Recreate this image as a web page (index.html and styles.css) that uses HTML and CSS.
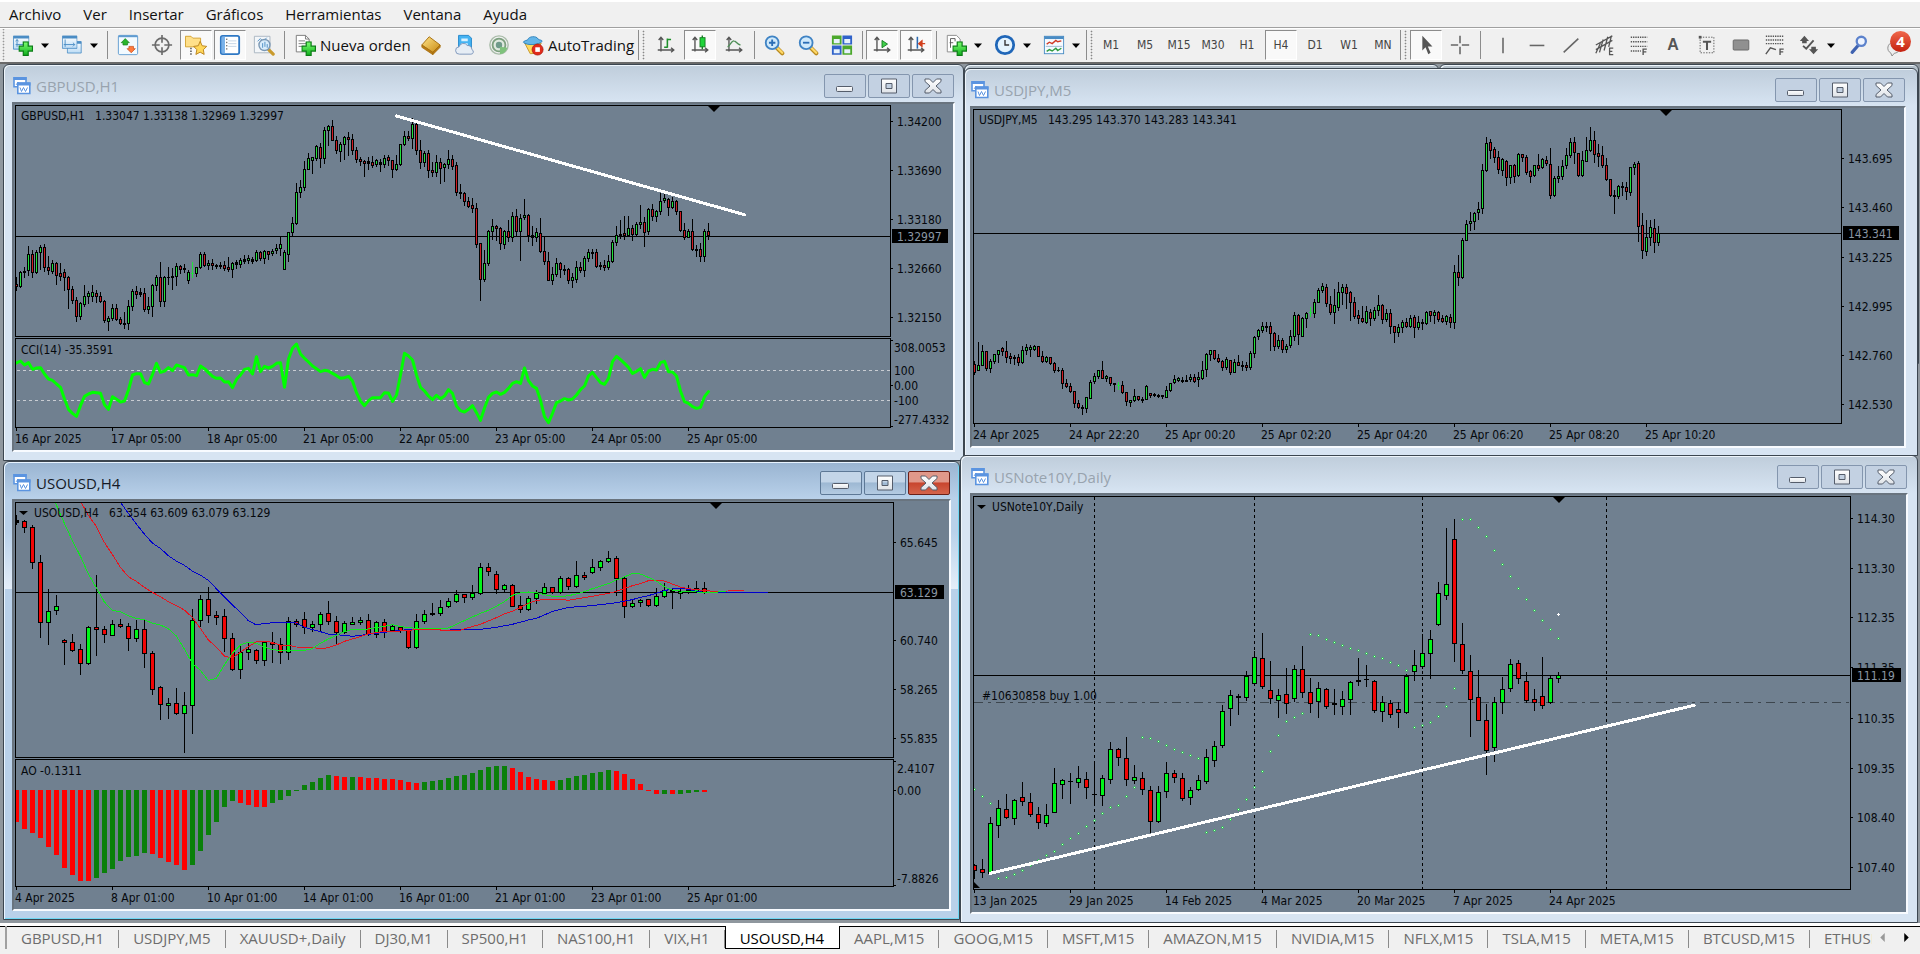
FILE: index.html
```html
<!DOCTYPE html>
<html lang="es">
<head>
<meta charset="utf-8">
<title>Terminal - USOUSD,H4</title>
<link rel="stylesheet" href="styles.css">
</head>
<body>
<svg class="defs" aria-hidden="true">
  <defs>
    <linearGradient id="plus" x2="0" y2="1"><stop stop-color="#7dff72"/><stop offset="1" stop-color="#0fae1c"/></linearGradient>
    <linearGradient id="sky" x2="0" y2="1"><stop stop-color="#fff"/><stop offset="1" stop-color="#bcdcf5"/></linearGradient>
    <linearGradient id="gold" x2="1" y2="1"><stop stop-color="#ffe58a"/><stop offset="1" stop-color="#c98a12"/></linearGradient>
    <linearGradient id="steel" x2="0" y2="1"><stop stop-color="#fff"/><stop offset="1" stop-color="#dfe3e8"/></linearGradient>
  </defs>
  <symbol id="i-plus" viewBox="0 0 12 12"><path d="M4 .5h4V4h3.500v4H8v3.500H4V8H.5V4H4z" fill="url(#plus)" stroke="#0b7d16"/></symbol>
  <symbol id="i-doc" viewBox="0 0 18 18"><path d="M.5 1.500h17v14H.5z" fill="url(#sky)" stroke="#4a8cc4"/><path d="M.5 1h17v3H.5z" fill="#4a8cc4"/></symbol>
  <symbol id="i-lens" viewBox="0 0 24 24"><path d="M15 15l6 6" stroke="#b98a1e" stroke-width="4.500" stroke-linecap="round"/><path d="M15.500 15l5.500 5.500" stroke="#ffd968" stroke-width="2.500" stroke-linecap="round"/><circle cx="10" cy="9.500" r="7" fill="#cfe9fb" stroke="#3f83c4" stroke-width="2"/></symbol>
  <symbol id="i-axes" viewBox="0 0 24 24"><path d="M6.500 4v15M3 17.500h17M4 6.500l2.500-3 2.500 3M17.500 15l3 2.500-3 2.500" fill="none" stroke="#555" stroke-width="1.500"/></symbol>
  <symbol id="i-win" viewBox="0 0 18 18"><path d="M1 .8h12v9H1z" fill="#fff" stroke="#5b94e0" stroke-width="1.600"/><path d="M.5 0h13v3H.5z" fill="#5b94e0"/><path d="M3 8l2-3 2 2" fill="none" stroke="#7aa7e4"/><path d="M4.800 6h12v10.500h-12z" fill="#fff" stroke="#5b94e0" stroke-width="1.600"/><path d="M4 5.500h13.500V8.500H4z" fill="#5b94e0"/><path d="M7 10.500l1.500 4 2-4 2 4 2-4" fill="none" stroke="#5b94e0"/></symbol>
  <symbol id="i-min" viewBox="0 0 20 18"><rect x="1.500" y="9.500" width="16" height="5" rx="1" fill="url(#steel)" stroke="#555d6b"/></symbol>
  <symbol id="i-max" viewBox="0 0 20 18"><path d="M2.500 2h15v14h-15zM7 6.500v5h6v-5z" fill="url(#steel)" fill-rule="evenodd" stroke="#555d6b"/></symbol>
  <symbol id="i-x" viewBox="0 0 20 18"><path d="M2 2h4.500L10 5.500 13.500 2H18v2.500L13 9l5 4.500V16h-4.500L10 12.500 6.500 16H2v-2.500L7 9 2 4.500z" fill="url(#steel)" stroke="#555d6b"/></symbol>
  <symbol id="i-caret" viewBox="0 0 8 5"><path d="M0 .5h8L4 5z"/></symbol>
</svg>

<nav class="menu" aria-label="Menú principal">
  <button>Archivo</button><button>Ver</button><button>Insertar</button><button>Gráficos</button><button>Herramientas</button><button>Ventana</button><button>Ayuda</button>
</nav>

<div class="toolbar" role="toolbar" aria-label="Herramientas">
  <div class="group group-standard">
    <button class="tool" aria-label="Nuevo gráfico"><svg viewBox="0 0 24 24"><use href="#i-doc" x="1" y="1" width="18" height="18"/><path d="M5.500 6v8M4 11.500h11M4 8l1.500-2 1.500 2" fill="none" stroke="#4a8cc4"/><use href="#i-plus" x="7" y="8" width="16" height="16"/></svg></button>
    <button class="drop" aria-label="Lista de gráficos"><svg><use href="#i-caret"/></svg></button>
    <button class="tool" aria-label="Perfiles"><svg viewBox="0 0 24 24"><use href="#i-doc" x="6" y="7" width="17" height="16"/><use href="#i-doc" x="1" y="1" width="17" height="17"/><path d="M4.500 6v8M3 11.500h12M13 9.500l2 2-2 2" fill="none" stroke="#4a8cc4"/></svg></button>
    <button class="drop" aria-label="Lista de perfiles"><svg><use href="#i-caret"/></svg></button>
    <i class="sep"></i>
    <button class="tool" aria-label="Observación del mercado"><svg viewBox="0 0 24 24"><rect x="1.500" y="1.500" width="21" height="21" rx="1.500" fill="#f2faff" stroke="#5f9bd0"/><path d="M1.500 2.500h21" stroke="#5f9bd0" stroke-width="2"/><path d="M9 5l4.500 4.500h-2V12h-5V9.500h-2z" fill="#28b52c" stroke="#157a1a" stroke-width=".7"/><path d="M15.500 20.500L11 16h2v-2.500h5V16h2z" fill="#ff7a3c" stroke="#c2410c" stroke-width=".7"/></svg></button>
    <button class="tool" aria-label="Ventana de datos"><svg viewBox="0 0 24 24" fill="none" stroke="#6b6b6b"><circle cx="12" cy="12" r="7.500" stroke-width="1.800"/><path d="M12 1v8.500M12 14.500V23M1 12h8.500M14.500 12H23" stroke-width="1.800"/></svg></button>
    <button class="tool is-on" aria-label="Navegador"><svg viewBox="0 0 24 24"><path d="M.5 14V2.500h6l2 2H17V14z" fill="#ffe08a" stroke="#d1a02c"/><path d="M6.500 15v8" stroke="#444" stroke-width="1.500" stroke-dasharray="1.500 1.500"/><path d="M16.500 8l2.200 4.800 5 .7-3.700 3.600.9 5.200-4.400-2.500-4.600 2.500 1-5.200L9.500 13.500l5-.7z" fill="#ffd75a" stroke="#b8801a"/></svg></button>
    <button class="tool is-on" aria-label="Terminal"><svg viewBox="0 0 24 24"><rect x="2" y="2" width="20" height="20" rx="2" fill="#fff" stroke="#2f78c4" stroke-width="2"/><path d="M3 3h3.500v18H3z" fill="#79b2ea"/><path d="M10 7.500h9M10 10.500h9M10 13.500h9" stroke="#c3d3e4"/><path d="M8.500 5v14" stroke="#333" stroke-dasharray="1.500 2"/></svg></button>
    <button class="tool" aria-label="Probador de estrategias"><svg viewBox="0 0 24 24"><path d="M1.500 2.500h17v18h-17z" fill="#f3f6f9" stroke="#a7b3bf"/><path d="M5 8l3-3 3 3 4-4" fill="none" stroke="#4a8cc4"/><path d="M17 17l5 5" stroke="#c99a2c" stroke-width="3.500" stroke-linecap="round"/><circle cx="12.500" cy="12" r="6" fill="#d9edfb" stroke="#7b98b4" stroke-width="1.500"/><path d="M10.500 10v5M13 8.500v5.500M15.500 11v4" stroke="#4a8cc4"/></svg></button>
    <i class="sep"></i>
    <button class="tool wide wide-order"><svg viewBox="0 0 24 24"><path d="M2.500 1.500h10l4 4v14h-14z" fill="#fff" stroke="#777"/><path d="M12.500 1.500v4h4M5 7.500h7M5 10.500h9M5 13.500h6" fill="none" stroke="#777"/><use href="#i-plus" x="8" y="8" width="16" height="16"/></svg>Nueva orden</button>
    <button class="tool" aria-label="MetaEditor"><svg viewBox="0 0 24 24"><path d="M10 3l12 9-8 8L2 12z" fill="url(#gold)" stroke="#a46c0c"/><path d="M2 12v2.500L14 22.500v-2.500zM14 20l8-8v2.500l-8 8z" fill="#b97c14" stroke="#a46c0c" stroke-width=".8"/></svg></button>
    <button class="tool" aria-label="VPS"><svg viewBox="0 0 24 24"><path d="M5 1.500h11l3 3V15H5z" fill="#45b3f2" stroke="#1d83c9"/><path d="M8 5h7v3H8zM8 10h7v2H8z" fill="#d8f1ff"/><path d="M6 22a4 4 0 01-.5-8 5 5 0 019-1.500 4.500 4.500 0 015 4.500 2.600 2.600 0 01-1 5z" fill="#e6edf5" stroke="#7b93b8"/></svg></button>
    <button class="tool" aria-label="Señales"><svg viewBox="0 0 24 24" fill="none"><circle cx="12" cy="12" r="10" stroke="#a9bca9" stroke-width="1.500"/><circle cx="12" cy="12" r="7" fill="#dfe9df" stroke="#7da07f" stroke-width="2"/><circle cx="12" cy="12" r="3.500" fill="#6f9a8a"/><path d="M13 14v8a9 9 0 008-7z" fill="#7fc27c"/></svg></button>
    <button class="tool wide wide-auto"><svg viewBox="0 0 24 24"><path d="M3 10h18l-6 11-6 .5z" fill="#ffd95c" stroke="#c5952a"/><path d="M1.500 9c1-2.500 4-1.500 5-3 .5-3.500 9.500-4.500 11-.5 1.500 1.500 4 .5 4.500 2.500-3 4-17 5-20.500 1z" fill="#63b5e8" stroke="#2c80ba"/><circle cx="17" cy="17" r="6" fill="#e22c1c" stroke="#a81408" stroke-width=".8"/><rect x="14.500" y="14.500" width="5" height="5" fill="#fff"/></svg>AutoTrading</button>
  </div>
  <div class="group group-charts">
    <i class="handle"></i>
    <button class="tool" aria-label="Barras"><svg viewBox="0 0 24 24"><use href="#i-axes"/><path d="M13.500 5v10M13.500 6h4M10 14.500h3.500" stroke="#1e8f2b" stroke-width="1.700"/></svg></button>
    <button class="tool is-on" aria-label="Velas japonesas"><svg viewBox="0 0 24 24"><use href="#i-axes"/><path d="M14.500 1.500v15" stroke="#167a22" stroke-width="1.500"/><rect x="12" y="4" width="5.500" height="10" fill="#1fd43a" stroke="#167a22"/></svg></button>
    <button class="tool" aria-label="Línea"><svg viewBox="0 0 24 24"><use href="#i-axes"/><path d="M5 14c3-1 4-7 7-6.500 2.500.3 3 3.500 7 4.500" fill="none" stroke="#4f8f58" stroke-width="1.500"/></svg></button>
    <i class="sep"></i>
    <button class="tool" aria-label="Acercar"><svg viewBox="0 0 24 24"><use href="#i-lens"/><path d="M6.500 9.500h7M10 6v7" stroke="#2a6db5" stroke-width="2"/></svg></button>
    <button class="tool" aria-label="Alejar"><svg viewBox="0 0 24 24"><use href="#i-lens"/><path d="M6.500 9.500h7" stroke="#2a6db5" stroke-width="2"/></svg></button>
    <button class="tool" aria-label="Mosaico"><svg viewBox="0 0 24 24"><path d="M1 1.500h10.500v10H1zM12.500 12.500H23v10H12.500z" fill="#4ca82c"/><path d="M12.500 1.500H23v10H12.500zM1 12.500h10.500v10H1z" fill="#2f62c9"/><path d="M3 5.500h6.500V10H3zM14.500 5.500H21V10h-6.500zM3 16.500h6.500V21H3zM14.500 16.500H21V21h-6.500z" fill="#e6f1fb"/></svg></button>
    <i class="sep"></i>
    <button class="tool is-on" aria-label="Desplazamiento automático"><svg viewBox="0 0 24 24"><use href="#i-axes"/><path d="M12 7l6 4-6 4z" fill="#3fd04a" stroke="#167a22"/></svg></button>
    <button class="tool is-on" aria-label="Desplazar gráfico"><svg viewBox="0 0 24 24"><use href="#i-axes"/><path d="M13.500 3v13" stroke="#2c6ab0" stroke-width="1.700"/><path d="M22 10.500h-6M18.500 7.500l-3.500 3 3.500 3z" fill="#d2401e" stroke="#d2401e" stroke-width="1.500"/></svg></button>
    <i class="sep"></i>
    <button class="tool" aria-label="Indicadores"><svg viewBox="0 0 24 24"><path d="M2.500 1.500h10l4 4v14h-14z" fill="#fff" stroke="#888"/><path d="M6 5v10M6 5h5M11 5v3M5 9.500h4" fill="none" stroke="#555"/><use href="#i-plus" x="8" y="8" width="16" height="16"/></svg></button>
    <button class="drop" aria-label="Lista de indicadores"><svg><use href="#i-caret"/></svg></button>
    <button class="tool" aria-label="Periodicidad"><svg viewBox="0 0 24 24"><circle cx="12" cy="12" r="9.500" fill="#e4f3fd" stroke="#1f66b8" stroke-width="3"/><path d="M12 6.500V12h4.500" fill="none" stroke="#333" stroke-width="1.500"/></svg></button>
    <button class="drop" aria-label="Lista de periodos"><svg><use href="#i-caret"/></svg></button>
    <button class="tool" aria-label="Plantillas"><svg viewBox="0 0 24 24"><rect x="1.500" y="2.500" width="21" height="19" fill="#f5faff" stroke="#4a8cc4"/><path d="M1.500 4h21" stroke="#4a8cc4" stroke-width="3"/><path d="M4 11l3-2 3 1.500L14 7l2 1.500 4-1" fill="none" stroke="#d13a24" stroke-width="1.500"/><path d="M3 13.500h18" stroke="#9db7cf"/><path d="M4 19l3-2 3 1.500 4-3 2 2.500 4-2.500" fill="none" stroke="#2f9c40" stroke-width="1.500"/></svg></button>
    <button class="drop" aria-label="Lista de plantillas"><svg><use href="#i-caret"/></svg></button>
  </div>
  <div class="group group-periods">
    <i class="handle"></i>
    <button class="tool">M1</button><button class="tool">M5</button><button class="tool">M15</button><button class="tool">M30</button><button class="tool">H1</button><button class="tool is-on">H4</button><button class="tool">D1</button><button class="tool">W1</button><button class="tool">MN</button>
  </div>
  <div class="group group-lines">
    <i class="handle"></i>
    <button class="tool is-on" aria-label="Cursor"><svg viewBox="0 0 24 24"><path d="M8 2v16l3.500-3.500L14.500 22l2.500-1.500-3-7h5z" fill="#555"/></svg></button>
    <button class="tool" aria-label="Cruz"><svg viewBox="0 0 24 24"><path d="M12 2v8M12 14v8M2 12h8M14 12h8" stroke="#666" stroke-width="1.700"/></svg></button>
    <i class="sep"></i>
    <button class="tool" aria-label="Línea vertical"><svg viewBox="0 0 24 24"><path d="M12 4v17" stroke="#666" stroke-width="1.700"/></svg></button>
    <button class="tool" aria-label="Línea horizontal"><svg viewBox="0 0 24 24"><path d="M4 12.500h16" stroke="#666" stroke-width="1.700"/></svg></button>
    <button class="tool" aria-label="Línea de tendencia"><svg viewBox="0 0 24 24"><path d="M4 20L20 5" stroke="#666" stroke-width="1.700"/></svg></button>
    <button class="tool" aria-label="Canal"><svg viewBox="0 0 24 24"><path d="M2 17L20 7M2 12L20 2M6 20L10 6M11 18l4-15M2 21l5-11M16 14l3-12" stroke="#555" stroke-width="1.400"/><path d="M21 15.500h-4v7h4M17 19h3" fill="none" stroke="#555" stroke-width="1.400"/></svg></button>
    <button class="tool" aria-label="Fibonacci"><svg viewBox="0 0 24 24"><path d="M3 3.500h18M3 8.500h18M3 13.500h18M3 18.500h11" stroke="#555" stroke-width="1.500" stroke-dasharray="1.500 1"/><path d="M20.500 16.500h-4V23M16.500 19.500h3.500" fill="none" stroke="#555" stroke-width="1.500"/></svg></button>
    <button class="tool letter">A</button>
    <button class="tool" aria-label="Etiqueta"><svg viewBox="0 0 24 24"><path d="M4.500 3.500h15v17h-15z" fill="none" stroke="#555" stroke-dasharray="1.500 1.500"/><path d="M3 2h3v3H3z" fill="#555"/><path d="M7.500 8.500h9M12 8.500v9" stroke="#555" stroke-width="2.200"/></svg></button>
    <button class="tool" aria-label="Rectángulo"><svg viewBox="0 0 24 24"><rect x="3.500" y="6.500" width="17" height="11" rx="1" fill="#909090" stroke="#666"/></svg></button>
    <button class="tool" aria-label="Expansión"><svg viewBox="0 0 24 24"><path d="M2 2.500h20M2 6.500h20M2 10.500h20" stroke="#555" stroke-width="1.500" stroke-dasharray="1.500 1"/><path d="M2 22l5-7 6 2M21.500 16.500h-4V23M17.500 19.500h3.500" fill="none" stroke="#555" stroke-width="1.500"/></svg></button>
    <button class="tool" aria-label="Flechas"><svg viewBox="0 0 24 24"><path d="M7 2l5 5.500H9.500V10h-5V7.500H2zM17 22l-5-5.500h2.500V14h5v2.500H22z" fill="#555"/><path d="M5.500 13l3.500 3 8-9" fill="none" stroke="#555" stroke-width="2"/></svg></button>
    <button class="drop" aria-label="Lista de flechas"><svg><use href="#i-caret"/></svg></button>
  </div>
  <div class="group group-end">
    <button class="tool" aria-label="Buscar"><svg viewBox="0 0 24 24"><path d="M4.500 20l6.500-7.500" stroke="#3f62b0" stroke-width="3.500" stroke-linecap="round"/><circle cx="14.500" cy="8" r="5" fill="#eef4ff" stroke="#5c82cc" stroke-width="2.500"/></svg></button>
    <button class="tool chat" aria-label="Mensajes"><svg viewBox="0 0 24 24"><path d="M4 20.500c-5-2-4-11 3-11.500 9-1 10 11 1 12l-2.500 3z" fill="#eee" stroke="#888"/></svg><span class="badge">4</span></button>
  </div>
</div>

<main class="workspace">
  <div class="window backdrop backdrop-a"></div>
  <div class="window backdrop backdrop-b"></div>
  <section class="window w-gbp" data-chart="gbp"><header class="title"><svg class="title-icon"><use href="#i-win"/></svg><h2>GBPUSD,H1</h2>
    <button aria-label="Minimizar"><svg><use href="#i-min"/></svg></button><button aria-label="Maximizar"><svg><use href="#i-max"/></svg></button><button class="close" aria-label="Cerrar"><svg><use href="#i-x"/></svg></button></header><div class="client"></div></section>
  <section class="window w-jpy" data-chart="jpy"><header class="title"><svg class="title-icon"><use href="#i-win"/></svg><h2>USDJPY,M5</h2>
    <button aria-label="Minimizar"><svg><use href="#i-min"/></svg></button><button aria-label="Maximizar"><svg><use href="#i-max"/></svg></button><button class="close" aria-label="Cerrar"><svg><use href="#i-x"/></svg></button></header><div class="client"></div></section>
  <section class="window w-note" data-chart="note"><header class="title"><svg class="title-icon"><use href="#i-win"/></svg><h2>USNote10Y,Daily</h2>
    <button aria-label="Minimizar"><svg><use href="#i-min"/></svg></button><button aria-label="Maximizar"><svg><use href="#i-max"/></svg></button><button class="close" aria-label="Cerrar"><svg><use href="#i-x"/></svg></button></header><div class="client"></div></section>
  <section class="window is-active w-uso" data-chart="uso"><header class="title"><svg class="title-icon"><use href="#i-win"/></svg><h2>USOUSD,H4</h2>
    <button aria-label="Minimizar"><svg><use href="#i-min"/></svg></button><button aria-label="Maximizar"><svg><use href="#i-max"/></svg></button><button class="close" aria-label="Cerrar"><svg><use href="#i-x"/></svg></button></header><div class="client"></div></section>
</main>

<footer class="tabs">
  <div class="tab-list" role="tablist" aria-label="Gráficos abiertos">
    <button role="tab">GBPUSD,H1</button><button role="tab">USDJPY,M5</button><button role="tab">XAUUSD+,Daily</button><button role="tab">DJ30,M1</button><button role="tab">SP500,H1</button><button role="tab">NAS100,H1</button><button role="tab">VIX,H1</button><button role="tab" aria-selected="true">USOUSD,H4</button><button role="tab">AAPL,M15</button><button role="tab">GOOG,M15</button><button role="tab">MSFT,M15</button><button role="tab">AMAZON,M15</button><button role="tab">NVIDIA,M15</button><button role="tab">NFLX,M15</button><button role="tab">TSLA,M15</button><button role="tab">META,M15</button><button role="tab">BTCUSD,M15</button><button role="tab">ETHUSD,M15</button>
  </div>
  <button class="scroll is-off" aria-label="Anterior"><svg viewBox="0 0 5 10"><path d="M5 0v10L0 5z"/></svg></button>
  <button class="scroll" aria-label="Siguiente"><svg viewBox="0 0 5 10"><path d="M0 0v10l5-5z"/></svg></button>
</footer>
<script src="charts.js"></script>
</body>
</html>
```
FILE: styles.css
```css
:root {
  --ui: "Open Sans", "Noto Sans", sans-serif;
  --chart: "DejaVu Sans Condensed", "Noto Sans", sans-serif;
  --slate: #708090;
}
* { box-sizing: border-box; }
body { margin: 0; height: 100vh; display: flex; flex-direction: column; background: #f0f0f0; font-family: var(--ui); overflow: hidden; }
button { font: inherit; color: inherit; background: none; border: 0; padding: 0; margin: 0; }
svg { display: block; flex: none; }
.defs { position: absolute; width: 0; height: 0; }

.menu { flex: none; height: 28px; border-top: 2px solid #fff; border-bottom: 1px solid #a0a0a0; display: flex; align-items: center; gap: 22px; padding: 0 0 2px 9px; font-size: 15px; color: #111; }

.toolbar { flex: none; height: 36px; border-top: 1px solid #fff; border-bottom: 2px solid #696969; padding-bottom: 1px; display: flex; align-items: stretch; }
.group { display: flex; align-items: center; flex: none; }
.group-standard { padding-left: 6px; background: radial-gradient(circle, #999 40%, transparent 50%) 2px 5px / 3px 3px repeat-y; }
.group-end { margin-left: auto; padding-right: 5px; gap: 5px; }
.tool { width: 34px; height: 30px; display: flex; align-items: center; justify-content: center; flex: none; }
.tool svg { width: 22px; height: 22px; }
.tool.is-on { width: 32px; margin: 0 1px; border: 1px solid #8c8c8c; border-right-color: #fff; border-bottom-color: #fff; background: #f9f9f9; }
.wide { justify-content: flex-start; padding-left: 6px; gap: 4px; font-size: 15px; color: #111; white-space: nowrap; }
.wide-order { width: 126px; }
.wide-auto { width: 122px; }
.letter { font: bold 16px "Liberation Sans", sans-serif; color: #555; }
.drop { width: 15px; height: 30px; padding-left: 1px; display: flex; align-items: center; }
.drop svg { width: 8px; height: 5px; }
.sep { width: 7px; height: 28px; background: linear-gradient(#8c8c8c, #8c8c8c) 3px 0 / 1px 100% no-repeat; }
.group-charts .sep { width: 6px; }
.group-lines .sep { width: 9px; }
.handle { width: 9px; height: 30px; border-left: 1px solid #8c8c8c; background: radial-gradient(circle, #888 40%, transparent 50%) 3px 0 / 3px 3px repeat-y; }
.group-charts .handle { width: 11px; }
.group-periods .handle { width: 8px; }
.group-periods { font: 12px var(--chart); color: #444; }
.chat { position: relative; }
.badge { position: absolute; right: 4px; top: 1px; width: 21px; height: 21px; border-radius: 50%; background: linear-gradient(#f0684c, #c4210f); color: #fff; font: bold 15px/21px "Open Sans", sans-serif; text-align: center; }

.workspace { flex: 1; position: relative; background: #8f979e; overflow: hidden; }
.window { position: absolute; display: flex; flex-direction: column; border: 1px solid #3c4650; border-radius: 6px 6px 0 0; padding: 0 8px 8px; background: linear-gradient(#bfcddb, #d7e4f2 37px, #d7e4f2); box-shadow: inset 1px 1px 0 #eef5fb; }
.window.is-active { background: linear-gradient(#99b4d1, #b9d1ea 37px, #b9d1ea 70px, #e4eef9 127px, #b9d1ea 127px); box-shadow: inset 1px 1px 0 #e8f4ff, inset -1px -1px 0 #6fd8f5; }
.w-gbp { left: 3px; top: 0; width: 961px; height: 397px; --axis: 62px; --sub: 90px; }
.w-uso { left: 3px; top: 397px; width: 957px; height: 459px; --axis: 55px; --sub: 128px; }
.w-jpy { left: 964px; top: 4px; width: 954px; height: 388px; padding: 0 11px 7px 5px; --axis: 62px; }
.w-note { left: 960px; top: 391px; width: 958px; height: 468px; padding: 0 9px 8px 9px; --axis: 55px; }
.backdrop { top: 0; height: 300px; background: #b4c0ca; }
.backdrop-a { left: 964px; width: 475px; }
.backdrop-b { left: 1439px; width: 480px; }
.title { flex: none; height: 37px; display: flex; align-items: center; gap: 2px; padding: 8px 1px 4px; color: #98a3ae; }
.title-icon { width: 18px; height: 18px; margin-right: 3px; }
.title h2 { flex: 1; margin: 0; font-size: 15px; font-weight: 400; line-height: 24px; }
.title button { width: 42px; height: 24px; border: 1px solid #8496ae; border-radius: 2px; background: #c3d1e2; display: flex; align-items: center; justify-content: center; }
.title button svg { width: 20px; height: 18px; }
.is-active .title { color: #161a26; }
.is-active .title button { border-color: #5d7896; background: linear-gradient(#c3d5e8 45%, #9db8d3 50%, #b4cbe2); }
.is-active .title .close { border-color: #6b2018; background: linear-gradient(#e0988a 45%, #c8452e 50%, #d4644c); }

.client { flex: 1; min-height: 0; border: 2px solid #69747f; border-right-color: #f8fbff; border-bottom-color: #f8fbff; padding: 1px 0 0 1px; background: var(--slate); display: grid; grid-template-columns: 1fr var(--axis); grid-template-rows: 1fr 22px; }
.client.has-sub { grid-template-rows: 1fr 1px var(--sub) 22px; }
.client svg { width: 100%; height: 100%; min-width: 0; min-height: 0; font: 12px var(--chart); }
.client .plot { border: 1px solid #000; overflow: hidden; }
.client .axis { overflow: visible; }
.gap, .time { grid-column: 1 / -1; }

.tabs { flex: none; height: 31px; display: flex; align-items: stretch; border-top: 3px solid #fff; box-shadow: inset 0 1px 0 #000; padding-bottom: 5px; }
.tab-list { flex: 1; min-width: 0; display: flex; overflow: hidden; margin-left: 5px; border-left: 2px solid #a0a0a0; }
.tab-list button { flex: none; padding: 0 15px 0 14px; font-size: 15px; line-height: 24px; color: #6d6d6d; background: linear-gradient(#8a8a8a, #8a8a8a) 100% 4px / 1px 18px no-repeat; }
.tab-list button[aria-selected="true"] { background: #fff; color: #000; border: 1px solid #000; border-top: 0; }
.scroll { width: 24px; padding-left: 8px; display: flex; align-items: center; }
.scroll svg { width: 5px; height: 9px; }
.is-off { color: #999; fill: #999; }
```
FILE: charts.js
```js
// Every vertical value is stored in thirds of a pixel; "top" is the pixel row of the plot's first line.
const CHARTS = {
  gbp: {
    step: 4, top: 6, subTop: 239, green: '#22e03c', red: '#d01c24',
    head: 'GBPUSD,H1\u00a0\u00a0 1.33047 1.33138 1.32969 1.32997', shift: 698,
    price: [409, '1.32997', 56],
    scale: [[65, '1.34200'], [211, '1.33690'], [358, '1.33180'], [505, '1.32660'], [652, '1.32150']],
    time: ['16 Apr 2025', '17 Apr 05:00', '18 Apr 05:00', '21 Apr 05:00', '22 Apr 05:00', '23 Apr 05:00', '24 Apr 05:00', '25 Apr 05:00'],
    candles: `533 552 560 570 r,515 517 560 563 g,503 514 517 533 x,438 462 512 527 g,450 462 517 533 r,452 458 517 521 g,435 443 458 507 g,432 442 502 515 r,470 502 511 523 r,480 489 515 521 g,487 490 527 553 r,491 520 528 541 r,507 517 533 571 r,528 531 569 624 r,560 569 602 611 r,591 600 650 665 r,607 611 650 659 g,556 590 613 620 g,573 580 590 611 g,557 577 588 604 g,571 579 590 606 r,576 588 604 608 r,600 604 661 668 r,650 655 664 691 g,613 626 655 660 g,613 626 659 661 r,651 658 671 674 r,637 670 672 686 x,600 619 671 689 g,569 574 619 631 g,560 574 583 595 r,565 578 583 588 x,565 579 628 634 r,593 619 628 641 g,553 557 619 650 g,526 532 557 571 g,487 532 604 619 r,528 532 605 619 g,501 531 533 554 x,505 530 533 568 x,490 499 530 555 g,497 499 508 519 r,493 505 508 517 x,512 517 542 551 g,487 520 522 533 l,502 502 519 530 g,457 462 502 504 g,456 463 497 500 r,482 489 497 509 g,478 489 497 509 r,492 497 500 506 x,487 497 500 505 x,485 497 506 511 r,473 501 509 513 r,487 490 509 533 g,481 488 492 506 x,476 480 492 503 g,466 478 483 491 x,465 476 481 491 g,473 477 483 491 x,452 458 481 485 g,453 458 475 481 r,452 455 475 490 g,453 455 462 478 r,448 453 459 466 g,433 444 450 461 g,411 433 446 466 g,452 457 509 509 g,398 398 462 483 g,352 370 397 406 g,250 278 371 372 g,241 262 277 291 g,185 208 262 271 g,160 175 208 209 g,172 173 180 220 g,137 140 174 182 g,130 142 176 203 r,83 91 176 191 g,75 80 91 137 g,61 80 121 122 r,110 121 151 161 r,127 133 154 185 g,110 113 133 179 g,97 112 117 166 r,103 117 151 164 r,142 151 178 187 r,172 179 184 196 r,181 184 190 230 r,173 184 190 209 x,170 187 196 203 r,177 182 194 200 g,179 188 193 214 x,166 175 193 203 g,166 173 181 197 r,181 182 208 233 r,166 193 208 210 g,133 133 193 195 g,93 109 133 137 g,94 109 116 122 r,56 73 116 145 g,67 73 151 164 r,121 152 187 205 r,155 160 187 200 g,152 160 211 233 r,187 211 217 229 r,166 187 217 229 g,175 187 206 250 r,190 193 203 245 g,151 178 193 205 g,166 178 199 208 r,187 196 277 287 r,253 277 280 295 x,277 280 304 316 r,291 304 319 322 r,295 316 326 337 r,309 326 433 443 r,430 430 538 601 r,452 490 538 545 g,391 395 490 497 g,358 379 395 418 g,376 379 386 421 r,382 385 431 449 r,391 394 433 445 g,361 394 412 424 r,337 349 412 424 g,328 349 395 406 r,343 354 395 482 g,298 346 352 358 g,343 346 406 424 r,380 406 411 436 x,385 397 411 424 g,354 400 455 458 r,410 455 485 494 r,457 485 541 542 r,502 524 541 554 g,475 490 524 530 g,488 490 508 533 r,496 508 512 524 x,505 508 541 551 r,520 533 541 562 g,485 502 538 548 g,487 503 512 517 r,469 475 512 530 g,448 457 475 484 g,448 457 459 474 x,449 457 500 502 r,487 497 499 509 x,482 496 503 512 r,466 484 502 508 g,420 427 484 486 g,380 406 427 437 g,361 402 407 415 x,349 400 406 418 r,349 385 407 408 g,376 385 404 421 r,367 373 404 407 g,316 367 373 385 g,353 367 397 440 r,325 328 394 404 g,313 328 349 361 r,331 335 349 365 g,280 304 335 342 g,270 294 302 307 g,295 298 322 347 r,292 304 322 325 g,301 303 333 342 r,333 335 391 395 r,370 391 412 418 r,388 394 412 413 g,358 394 448 451 r,436 448 451 470 x,430 448 470 485 r,388 394 470 485 g,370 394 407 418 r`,
    trend: [1189, 48, 2233, 344],
    sub: {
      head: 'CCI(14) -35.3591', levels: [811, 902],
      line: '789 783 795 788 808 804 803 822 837 841 852 862 897 928 940 949 917 889 882 877 878 880 914 928 890 898 906 903 870 825 821 821 848 852 823 790 817 813 803 812 795 799 803 825 824 827 798 806 818 829 835 834 846 845 863 838 825 808 805 822 770 815 799 804 799 790 788 862 777 745 732 762 775 786 798 806 815 811 813 820 827 835 833 829 843 878 903 917 902 893 893 893 878 879 904 885 825 760 768 780 825 862 873 888 899 886 896 888 869 880 918 932 936 928 917 938 961 924 892 880 876 883 877 865 850 845 850 804 842 858 865 901 950 968 940 908 903 896 900 897 885 869 858 828 817 833 848 853 835 785 769 779 790 802 820 814 806 832 813 808 810 788 784 815 816 828 873 905 910 920 925 922 890 875',
      scale: [[743, '308.0053'], [811, '100'], [857, '0.00'], [902, '-100'], [959, '-277.4332']], ticks: [721, 857, 979]
    }
  },
  jpy: {
    step: 4, top: 20, green: '#22e03c', red: '#d01c24',
    head: 'USDJPY,M5\u00a0\u00a0 143.295 143.370 143.283 143.341', shift: 692,
    price: [430, '143.341', 56],
    scale: [[206, '143.695'], [353, '143.460'], [502, '143.225'], [650, '142.995'], [797, '142.760'], [944, '142.530']],
    time: ['24 Apr 2025', '24 Apr 22:20', '25 Apr 00:20', '25 Apr 02:20', '25 Apr 04:20', '25 Apr 06:20', '25 Apr 08:20', '25 Apr 10:20'],
    candles: `815 823 848 853 r,757 826 842 842 g,766 785 826 827 g,784 785 835 842 r,808 814 836 848 g,793 794 815 820 g,781 782 794 817 g,771 776 785 797 r,753 785 803 818 r,791 800 806 820 r,796 802 806 823 g,793 802 818 827 r,770 782 818 819 g,763 772 782 794 g,766 771 779 800 g,766 769 778 781 g,768 769 799 800 r,784 799 814 818 r,800 802 814 818 g,802 803 821 824 r,817 820 842 847 r,833 840 842 845 x,836 841 880 895 r,869 880 888 892 r,880 889 905 907 r,904 905 940 953 r,930 940 953 956 r,947 952 956 974 x,922 923 955 967 g,872 878 925 926 g,850 860 874 880 g,840 841 860 864 g,814 841 865 866 r,855 860 865 875 g,862 862 881 887 r,879 880 882 904 x,878 885 888 898 l,875 886 907 910 r,907 908 934 947 r,931 932 937 950 g,898 920 931 934 g,919 920 928 932 r,923 928 930 937 x,887 890 928 929 g,910 911 917 923 r,911 914 917 919 x,914 917 919 922 x,916 917 920 925 r,889 901 922 923 g,879 881 901 903 g,856 869 877 880 g,863 866 872 875 g,863 871 873 878 x,857 871 874 875 x,854 863 869 875 g,853 863 875 878 r,848 863 869 889 g,814 841 865 868 g,790 794 839 860 g,781 782 794 811 g,781 782 806 808 r,793 806 814 817 r,812 815 832 841 r,802 809 833 838 g,811 811 848 853 r,808 817 847 848 g,797 817 826 827 r,813 825 828 841 x,817 827 832 841 r,784 790 833 838 g,738 742 791 802 g,717 721 739 749 g,697 710 720 727 g,697 708 711 724 x,697 709 730 781 r,728 730 769 781 r,736 751 769 775 g,744 752 779 787 r,763 770 778 787 g,721 739 767 773 g,667 676 739 751 g,673 676 733 764 r,682 685 739 740 g,668 671 685 713 g,652 667 670 680 l,628 638 671 682 g,595 601 637 638 g,580 589 602 607 g,582 592 641 650 r,620 643 667 674 r,598 646 667 700 g,577 607 652 661 g,582 592 607 643 g,583 592 610 656 r,603 607 637 692 r,622 637 679 685 r,661 676 685 701 r,649 685 694 697 r,650 664 697 699 g,658 667 685 707 r,652 661 685 692 g,616 646 662 676 g,643 647 688 701 r,658 670 688 694 g,658 670 710 730 r,709 710 727 758 r,703 713 727 738 g,690 698 713 728 g,686 698 709 713 r,675 685 710 711 g,676 683 713 743 r,680 698 713 719 g,688 696 699 718 x,664 667 700 703 g,664 665 677 695 r,662 668 677 700 g,664 668 688 695 r,677 686 694 697 r,675 679 695 704 g,673 683 698 713 r,526 547 697 716 g,495 547 563 587 r,445 451 563 565 g,391 404 451 452 g,367 394 400 421 g,367 370 394 418 g,337 358 368 389 g,222 241 356 371 g,141 160 241 245 g,147 157 181 206 r,171 178 202 217 r,183 202 238 249 r,206 209 241 257 g,211 214 262 287 r,225 226 262 280 g,223 226 259 277 r,190 193 257 260 g,192 193 202 214 r,195 202 247 254 r,241 245 259 278 r,226 227 257 260 g,192 227 236 241 r,205 208 233 236 g,199 210 221 227 r,175 223 317 326 r,259 265 317 318 g,229 259 266 277 g,211 229 260 268 g,175 197 226 235 g,145 157 197 203 g,142 157 187 221 r,189 190 257 260 r,184 211 257 260 g,141 181 214 215 g,111 151 181 185 g,123 151 193 217 r,163 190 199 229 r,168 197 226 233 r,206 226 269 272 r,268 269 317 319 r,300 316 320 371 x,286 290 320 325 g,277 289 292 317 x,277 292 304 328 r,231 233 307 317 g,216 223 233 253 g,213 221 409 455 r,370 407 482 506 r,390 442 485 497 g,391 412 442 467 g,387 415 458 488 r,409 431 458 467 g`
  },
  uso: {
    step: 8, top: 53, subTop: 310, green: '#00f51a', red: '#f20505', menu: true,
    head: 'USOUSD,H4\u00a0\u00a0 63.354 63.609 63.079 63.129', shift: 700,
    price: [427, '63.129', 49],
    scale: [[277, '65.645'], [572, '60.740'], [718, '58.265'], [865, '55.835']],
    time: ['4 Apr 2025', '8 Apr 01:00', '10 Apr 01:00', '14 Apr 01:00', '16 Apr 01:00', '21 Apr 01:00', '23 Apr 01:00', '25 Apr 01:00'],
    candles: `197 212 218 224 x,212 214 233 248 r,226 232 338 356 r,316 337 518 563 r,418 485 518 582 g,436 469 482 494 g,568 571 577 644 r,553 577 602 605 r,583 598 641 674 r,529 532 641 643 g,375 532 539 617 r,529 538 554 578 r,511 523 556 557 g,508 523 530 532 r,520 529 566 602 r,512 538 566 573 g,512 538 611 651 r,604 610 718 734 r,708 712 764 809 r,744 760 766 806 g,714 760 791 792 r,726 766 791 906 g,477 511 766 849 g,437 448 512 529 g,411 448 497 517 r,484 496 503 524 r,479 499 566 605 r,550 565 659 662 r,590 607 659 686 g,581 598 607 629 g,598 601 632 641 r,574 578 632 647 g,547 577 584 638 r,565 584 607 641 r,503 515 607 627 g,508 514 523 530 r,487 508 532 551 r,514 523 532 545 g,487 493 523 542 g,454 490 515 524 r,500 514 548 581 r,514 520 548 551 g,502 517 523 524 g,501 512 517 524 g,493 511 553 556 r,514 517 553 563 g,508 517 545 563 r,526 529 542 545 g,530 532 542 548 r,538 541 593 596 r,493 514 593 596 g,481 493 514 521 g,460 490 494 496 x,451 472 491 496 g,444 454 469 472 g,421 433 455 458 g,432 433 443 458 r,406 431 443 448 g,340 352 431 434 g,340 352 364 377 r,365 373 419 431 r,403 407 419 425 g,403 406 469 470 r,439 466 479 488 r,439 445 479 482 g,421 430 445 461 g,399 412 430 432 g,411 412 427 431 r,380 385 427 430 g,382 385 409 419 r,333 376 409 413 g,366 376 383 389 r,327 352 368 371 g,331 334 353 361 g,303 325 334 338 g,318 325 385 437 r,379 385 470 503 r,448 461 470 471 g,448 452 458 470 g,447 449 467 468 r,415 439 467 468 g,400 421 440 443 g,415 420 423 476 x,415 425 431 444 g,407 420 424 430 x,395 415 424 426 g,398 414 427 430 r`,
    curves: [
      ['#0000cd', '362,158 385,190 409,222 433,252 457,279 481,295 505,317 529,333 553,346 577,363 601,375 625,391 649,416 673,440 697,465 721,486 745,512 769,525 793,520 841,517 889,519 913,531 937,539 961,545 985,552 1033,556 1057,559 1105,553 1153,547 1201,541 1249,537 1297,535 1345,537 1441,538 1489,532 1537,523 1585,510 1609,505 1633,495 1657,484 1705,472 1753,469 1801,464 1849,458 1897,449 1921,442 1945,437 1969,430 1993,422 2017,417 2041,415 2065,418 2089,424 2113,427 2304,427'],
      ['#e8141e', '244,158 265,196 289,229 313,277 337,313 361,352 385,380 409,394 433,412 457,427 481,440 505,455 529,467 553,480 577,502 601,535 625,570 649,591 673,618 697,624 721,607 745,590 769,576 793,573 817,577 841,585 865,586 889,591 937,592 961,596 985,593 1009,585 1033,574 1057,567 1081,560 1105,552 1153,544 1201,543 1249,539 1297,539 1345,541 1380,541 1405,533 1441,523 1465,513 1489,503 1513,492 1537,484 1561,472 1585,460 1609,452 1633,448 1681,448 1705,451 1729,447 1777,439 1825,430 1849,424 1873,416 1897,407 1921,401 1945,392 1969,390 1993,393 2017,402 2041,411 2065,416 2089,419 2140,424 2184,423 2232,421'],
      ['#10e820', '166,158 190,213 217,272 241,318 265,372 289,413 313,456 337,481 361,485 385,497 409,505 433,509 457,520 481,525 505,536 529,558 553,597 577,640 601,661 625,691 649,685 673,645 697,610 721,585 745,577 769,580 793,592 817,599 841,601 865,602 889,601 913,601 937,596 961,580 985,567 1009,556 1033,545 1057,538 1105,537 1129,533 1153,529 1177,524 1201,530 1249,535 1297,536 1345,534 1369,523 1393,512 1417,501 1441,490 1465,481 1489,469 1513,455 1537,436 1561,429 1585,426 1609,428 1633,434 1657,439 1681,440 1705,437 1729,432 1753,425 1777,416 1801,409 1825,401 1849,390 1873,381 1897,370 1921,372 1945,382 1969,393 1993,410 2017,421 2041,423 2065,424 2089,426 2113,427 2137,428 2178,423']
    ],
    sub: {
      head: 'AO -0.1311', base: 1020,
      bars: '1118r 1137r 1149r 1166r 1193r 1217r 1254r 1277r 1293r 1293r 1286g 1271g 1259g 1235g 1221g 1218g 1209g 1212r 1226r 1236r 1247r 1260r 1245g 1203g 1155g 1116g 1071g 1053g 1059r 1065r 1071r 1071r 1061g 1050g 1038g 1023g 1005g 996g 984g 975g 979r 981r 981g 981r 984r 985r 987r 988r 991r 996r 999r 996g 993g 992g 984g 978g 975g 969g 960g 951g 948g 948g 954r 966r 981r 987r 991r 993r 990g 984g 978g 975g 969g 966g 961g 963r 972r 987r 1002r 1023r 1032r 1032g 1032r 1032g 1029g 1026g 1026r',
      scale: [[956, '2.4107'], [1021, '0.00'], [1286, '-7.8826']], ticks: [934, 1021, 1306]
    }
  },
  note: {
    step: 8, top: 47, green: '#00f51a', red: '#f20505', menu: true, corner: true,
    head: 'USNote10Y,Daily', shift: 585,
    price: [676, '111.19', 49],
    order: [757, '#10630858 buy 1.00'],
    scale: [[206, '114.30'], [355, '113.30'], [502, '112.35'], [652, '111.35'], [805, '110.35'], [956, '109.35'], [1102, '108.40'], [1252, '107.40']],
    time: ['13 Jan 2025', '29 Jan 2025', '14 Feb 2025', '4 Mar 2025', '20 Mar 2025', '7 Apr 2025', '24 Apr 2025'],
    verticals: [15, 35, 56, 79],
    candles: `1243 1247 1262 1285 r,1228 1258 1268 1283 r,1102 1120 1270 1271 g,1051 1075 1126 1163 g,1033 1078 1102 1104 r,1047 1051 1105 1123 g,996 1042 1054 1066 r,1030 1057 1093 1100 r,1072 1093 1117 1135 r,1063 1096 1120 1130 g,955 1000 1087 1088 g,987 991 1003 1046 g,969 993 995 1061 x,949 985 997 1013 g,967 988 1012 1046 r,933 1032 1034 1061 x,977 985 1036 1066 g,877 898 989 1000 g,895 898 923 947 r,862 925 989 1006 r,946 982 991 1000 g,967 985 1018 1034 r,1009 1021 1114 1147 r,1010 1027 1114 1118 g,937 970 1024 1043 g,962 970 983 998 r,970 985 1045 1051 r,1013 1021 1042 1064 g,977 991 1018 1020 g,898 922 994 1001 g,875 889 932 950 g,767 784 886 892 g,721 736 775 825 g,733 739 742 794 x,664 679 743 750 g,605 622 700 707 g,551 625 710 715 r,634 721 745 760 r,718 736 751 803 g,655 733 760 791 r,647 658 745 754 g,589 658 727 743 r,686 727 760 788 r,697 715 754 803 g,714 718 769 776 r,718 761 764 794 x,724 748 769 794 g,694 697 748 794 g,625 691 694 707 x,646 687 689 710 x,692 694 782 788 r,739 757 784 815 g,752 760 794 802 r,758 778 788 832 r,673 679 788 790 g,601 646 664 692 g,553 610 649 656 g,542 568 610 686 g,397 430 523 527 g,234 403 436 449 g,207 268 580 635 r,519 583 662 671 r,615 664 748 860 r,660 742 811 812 r,763 811 902 974 r,742 757 893 933 g,682 718 757 791 g,627 643 716 723 g,631 640 685 701 r,667 694 751 758 r,717 748 757 782 r,622 739 766 776 r,679 685 757 761 g,667 677 686 697 g`,
    dots: '1018 1040 1060 1285 1282 1273 1261 1247 1232 1216 1204 1184 1165 1151 1129 1111 1090 1072 1066 1039 1012 862 865 875 887 898 908 916 925 1147 1141 1133 1108 1078 1048 1012 965 904 856 815 802 791 553 556 568 577 586 596 601 610 619 626 637 647 661 832 827 818 799 769 716 208 208 232 260 301 343 379 415 448 482 511 538 565',
    whiteDot: [73, 493],
    trend: [97, 1270, 2208, 766]
  }
};

const row = (v, top) => Math.floor(v / 3) - top;
const box = (x, y, w, h) => `M${x} ${y}h${w}v${h}h${-w}z`;
const text = (x, y, s, fill = '#05080c') => `<text x="${x}" y="${y}" fill="${fill}">${s}</text>`;
const fillPath = (d, fill) => `<path d="${d}" fill="${fill}" shape-rendering="crispEdges"/>`;
const line = (x1, y1, x2, y2, extra = '') => `<line x1="${x1}" y1="${y1}" x2="${x2}" y2="${y2}" stroke="#000" shape-rendering="crispEdges" ${extra}/>`;

function drawCandles(c) {
  const half = c.step === 8 ? 2 : 1;
  let black = '', green = '', red = '';
  c.candles.split(',').forEach((item, i) => {
    const parts = item.split(' ');
    const [h, t, b, l] = parts.slice(0, 4).map(v => row(+v, c.top));
    const kind = parts[4], x = i * c.step;
    if (kind === 'l') {
      green += box(x, h, 1, l - h + 1) + box(x - 1, t, 3, 1);
      return;
    }
    black += box(x, h, 1, l - h + 1) + box(x - half, t, half * 2 + 1, b - t + 1);
    if (kind !== 'x' && b - t > 1) {
      const inner = box(x - half + 1, t + 1, half * 2 - 1, b - t - 1);
      if (kind === 'g') green += inner; else red += inner;
    }
  });
  return fillPath(black, '#000') + fillPath(green, c.green) + fillPath(red, c.red);
}

function drawMain(c) {
  const y = row(c.price[0], c.top) + 0.5;
  let s = line(0, y, '100%', y);
  (c.verticals || []).forEach(i => { const x = i * c.step + 0.5; s += line(x, 0, x, '100%', 'stroke-dasharray="3 3"'); });
  if (c.order) {
    const oy = row(c.order[0], c.top) + 0.5;
    s += line(0, oy, '100%', oy, 'stroke-dasharray="9 5 3 5" opacity=".45"') + text(8, oy - 3, c.order[1]);
  }
  s += drawCandles(c);
  if (c.dots) {
    let outer = '', core = '';
    c.dots.split(' ').forEach((v, i) => {
      const x = i * c.step, dy = row(+v, c.top);
      outer += box(x - 1, dy, 3, 1) + box(x, dy - 1, 1, 3);
      core += box(x, dy, 1, 1);
    });
    const [wi, wv] = c.whiteDot, wx = wi * c.step, wy = row(wv, c.top);
    s += fillPath(outer, '#2fc352') + fillPath(core, '#c8ffd0') + fillPath(box(wx - 1, wy, 3, 1) + box(wx, wy - 1, 1, 3), '#fff');
  }
  (c.curves || []).forEach(([stroke, pts]) => {
    const p = pts.split(' ').map(q => { const [a, b] = q.split(',').map(Number); return `${(a - 48) / 3},${b / 3 - c.top}`; }).join(' ');
    s += `<polyline points="${p}" fill="none" stroke="${stroke}" shape-rendering="crispEdges"/>`;
  });
  if (c.trend) {
    const [a, b, d, e] = c.trend;
    s += `<line x1="${(a - 48) / 3}" y1="${b / 3 - c.top}" x2="${(d - 48) / 3}" y2="${e / 3 - c.top}" stroke="#fff" stroke-width="3" stroke-linecap="round" shape-rendering="crispEdges"/>`;
  }
  s += `<path d="M${c.shift - 6} 0h12l-6 6z"/>`;
  if (c.menu) s += '<path d="M3 8h9l-4.500 4z"/>';
  if (c.corner) s += '<path d="M0 385v6h6z"/>';
  return s + text(c.menu ? 18 : 5, 14, c.head);
}

function drawSub(c) {
  const sub = c.sub;
  let s = '';
  (sub.levels || []).forEach(v => {
    const y = row(v, c.subTop) + 0.5;
    s += `<line x1="1" y1="${y}" x2="100%" y2="${y}" stroke="#c8ccd2" stroke-dasharray="3 3" shape-rendering="crispEdges"/>`;
  });
  if (sub.line) {
    const pts = sub.line.split(' ').map((v, i) => `${i * c.step + 0.5},${v / 3 - c.subTop}`).join(' ');
    s += `<polyline points="${pts}" fill="none" stroke="#00ff00" stroke-width="3" stroke-linejoin="round" stroke-linecap="round"/>`;
  }
  if (sub.bars) {
    const base = row(sub.base, c.subTop), d = { r: '', g: '' };
    sub.bars.split(' ').forEach((v, i) => {
      const y = row(parseInt(v, 10), c.subTop);
      d[v.slice(-1)] += box(i * c.step - 2, Math.min(y, base), 5, Math.abs(y - base));
    });
    s += fillPath(d.r, '#ff0000') + fillPath(d.g, '#0a800a');
  }
  return s + text(5, 15, sub.head);
}

function drawScale(c) {
  const y = v => row(v, c.top) + 1;
  let s = '';
  c.scale.forEach(([v, t]) => { s += fillPath(box(0, y(v), 2, 1), '#000') + text(6, y(v) + 5, t); });
  const p = y(c.price[0]);
  return s + fillPath(box(1, p - 7, c.price[2], 14), '#000') + text(6, p + 5, c.price[1], '#8a96a3');
}

function drawSubScale(c) {
  let s = '';
  c.sub.ticks.forEach(v => { s += fillPath(box(0, row(v, c.subTop) + 1, 2, 1), '#000'); });
  c.sub.scale.forEach(([v, t]) => { s += text(3, row(v, c.subTop) + 6, t); });
  return s;
}

function drawTime(c) {
  return c.time.map((t, i) => fillPath(box(1 + i * 96, 0, 1, 3), '#000') + text(i * 96, 15, t)).join('');
}

document.querySelectorAll('[data-chart]').forEach(win => {
  const c = CHARTS[win.dataset.chart], client = win.querySelector('.client');
  let html = `<svg class="plot">${drawMain(c)}</svg><svg class="axis">${drawScale(c)}</svg>`;
  if (c.sub) {
    client.classList.add('has-sub');
    html += `<i class="gap"></i><svg class="plot">${drawSub(c)}</svg><svg class="axis">${drawSubScale(c)}</svg>`;
  }
  client.innerHTML = html + `<svg class="time">${drawTime(c)}</svg>`;
});
```
